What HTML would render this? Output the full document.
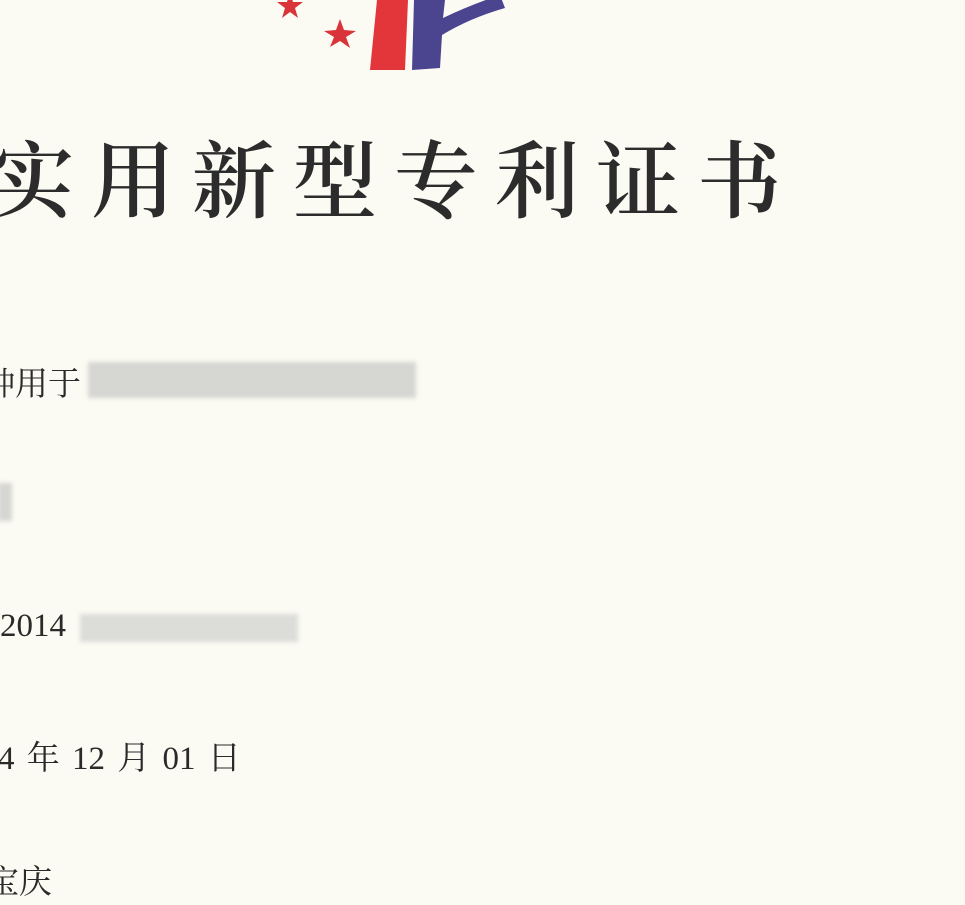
<!DOCTYPE html>
<html><head><meta charset="utf-8"><style>
body{margin:0;width:965px;height:905px;overflow:hidden;background:#fbfbf3;position:relative;font-family:"Liberation Serif","Noto Serif CJK SC",serif;color:#2a2a2a}
.t{position:absolute;white-space:nowrap}
.b{position:absolute;background:#d6d6d2;filter:blur(2px)}
</style></head><body>
<svg class="t" style="left:0;top:0" width="965" height="80">
<polygon points="290,-8 293,2 303,2 295,8 298,18 290,12 282,18 285,8 277,2 287,2" fill="#d8343a"/>
<polygon points="340,19 344,30 356,31 346,37 350,48 340,41 330,47 334,37 324,31 336,30" fill="#d8343a"/>
<polygon points="377,0 408,0 405,70 370,70" fill="#e2363a"/>
<path d="M414,0 L445,0 L443,18 Q470,5 500,-5 L505,8 Q470,18 442,35 L440,68 L412,70 Z" fill="#4b4590"/>
</svg>
<div class="t" style="left:-10px;top:115px;font-size:84px;letter-spacing:17px;font-weight:600;color:#2c2c2c;font-family:'Noto Serif CJK SC',serif">实用新型专利证书</div>
<div class="t" style="left:-18px;top:358px;font-size:33px">种用于</div>
<div class="b" style="left:88px;top:362px;width:328px;height:36px"></div>
<div class="b" style="left:-2px;top:483px;width:14px;height:38px"></div>
<div class="t" style="left:0;top:608px;font-size:33px">2014</div>
<div class="b" style="left:80px;top:614px;width:218px;height:28px;background:#dcdcd8"></div>
<div class="t" style="left:-2px;top:732px;font-size:33px;word-spacing:4px">4 年 12 月 01 日</div>
<div class="t" style="left:-14px;top:856px;font-size:33px">宝庆</div>
</body></html>
